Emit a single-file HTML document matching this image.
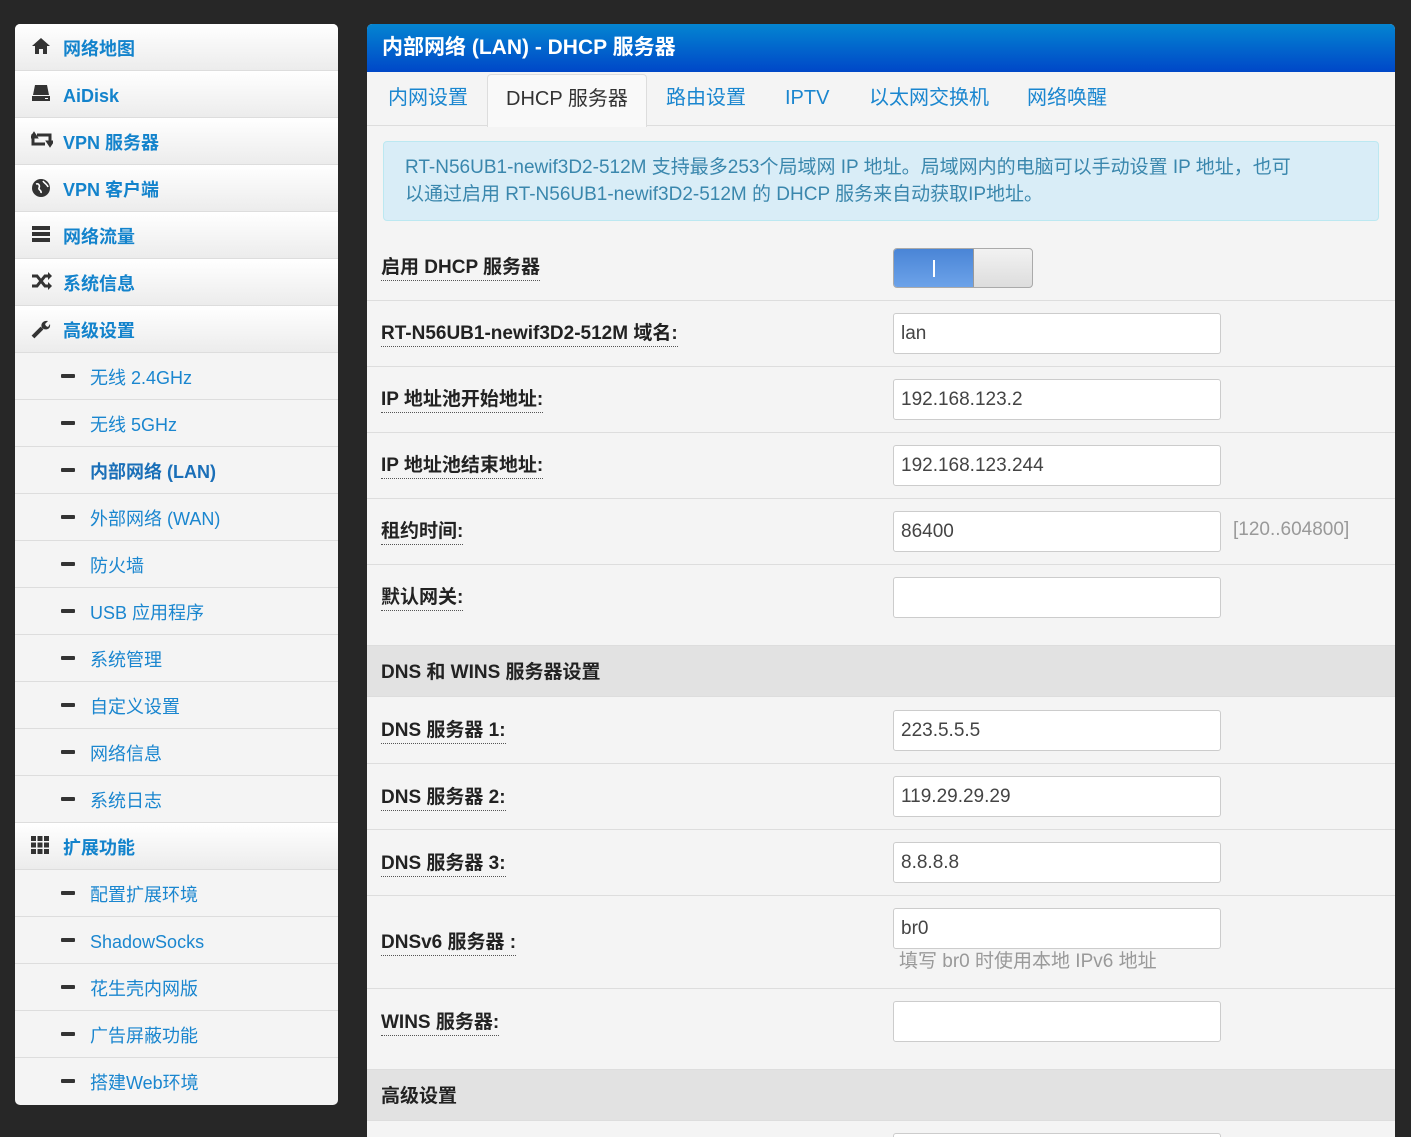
<!DOCTYPE html>
<html><head><meta charset="utf-8"><style>
*{box-sizing:border-box;margin:0;padding:0}
body{width:1411px;height:1137px;background:#272727;font-family:"Liberation Sans","Noto Sans CJK SC",sans-serif;overflow:hidden;position:relative}
.side{position:absolute;left:15px;top:24px;width:323px;height:1081px;background:#f4f4f4;border-radius:5px;overflow:hidden}
.it{position:absolute;left:0;width:323px;height:47px;border-bottom:1px solid #ddd}
.main{background:linear-gradient(#fff,#ececec)}
.main span{position:absolute;left:48px;top:13px;line-height:24px;font-weight:bold;font-size:18px;color:#1383cc}
.main svg{position:absolute;left:16px;top:13px}
.sub span{position:absolute;left:75px;top:13px;line-height:24px;font-size:18px;color:#1a86cf}
.sub i{position:absolute;left:46px;top:21px;width:14px;height:4px;background:#333;border-radius:1px}
.sub.act span{font-weight:bold;color:#1a6fb8}
.panel{position:absolute;left:367px;top:24px;width:1028px;height:1113px;background:#f4f4f4;border-radius:5px 5px 0 0;overflow:hidden}
.hdr{height:48px;background:linear-gradient(#0485d1,#0047c8);color:#fff;font-weight:bold;font-size:21px;line-height:26px;padding:11px 15px}
.tabs{position:absolute;top:48px;left:0;width:1028px;height:54px;border-bottom:1px solid #ddd}
.tab{position:absolute;top:13px;font-size:20px;line-height:26px;color:#1a86cf}
.tab.on{top:2px;height:53px;background:#f9f9f9;border:1px solid #ddd;border-bottom:none;border-radius:4px 4px 0 0;color:#333;padding:11px 18px 0}
.alert{position:absolute;left:16px;top:117px;width:996px;height:80px;background:#d9edf7;border:1px solid #bce8f1;border-radius:4px;color:#3a87ad;font-size:19px;line-height:27px;padding:12px 21px;white-space:nowrap}
.row{position:absolute;left:0;width:1028px;border-top:1px solid #ddd}
.lbl{position:absolute;left:14px;font-weight:bold;font-size:19px;color:#222;border-bottom:1px dotted #555;line-height:24px}
.inp{position:absolute;left:526px;width:328px;height:41px;background:#fff;border:1px solid #ccc;border-radius:3px;font-size:19px;line-height:22px;color:#444;padding:9px 7px}
.sec{position:absolute;left:0;width:1028px;height:52px;background:#e2e2e2;border-top:1px solid #ddd;border-bottom:1px solid #ddd;font-weight:bold;font-size:19px;line-height:24px;color:#222;padding:15px 14px 0}
</style></head><body>
<div class="side">
<div class="it main" style="top:0"><svg width="20" height="18" viewBox="0 0 20 18"><path d="M10 1L1 9h3v8h4v-5h4v5h4V9h3z" fill="#333"/></svg><span>网络地图</span></div>
<div class="it main" style="top:47px"><svg width="20" height="18" viewBox="0 0 20 18"><path d="M4 1h12l2 10H2z" fill="#333"/><rect x="1" y="12" width="18" height="5" fill="#333"/><rect x="14" y="14" width="3" height="1" fill="#fff"/></svg><span>AiDisk</span></div>
<div class="it main" style="top:94px"><svg width="22" height="18" viewBox="0 0 22 18"><path d="M2 3v10h12M5 6H1l2-3 2 3zM6 4h13v10M17 11h4l-2 3z" stroke="#333" stroke-width="3" fill="none"/></svg><span>VPN 服务器</span></div>
<div class="it main" style="top:141px"><svg width="20" height="20" viewBox="0 0 20 20"><circle cx="10" cy="10" r="9" fill="#333"/><path d="M5 6c3-1 4 2 3 4s3 2 2 5M12 3c1 2 4 3 5 6" stroke="#fff" stroke-width="1.6" fill="none"/></svg><span>VPN 客户端</span></div>
<div class="it main" style="top:188px"><svg width="20" height="18" viewBox="0 0 20 18"><rect x="1" y="1" width="18" height="4" fill="#333"/><rect x="1" y="7" width="18" height="4" fill="#333"/><rect x="1" y="13" width="18" height="4" fill="#333"/></svg><span>网络流量</span></div>
<div class="it main" style="top:235px"><svg width="22" height="18" viewBox="0 0 22 18"><path d="M1 4h5l8 10h4M1 14h5l8-10h4" stroke="#333" stroke-width="3" fill="none"/><path d="M17 0l4 4-4 4zM17 10l4 4-4 4z" fill="#333"/></svg><span>系统信息</span></div>
<div class="it main" style="top:282px"><svg width="20" height="20" viewBox="0 0 20 20"><path d="M2 18l9-9" stroke="#333" stroke-width="4"/><path d="M11 9c-2-4 1-8 6-7l-3 3 1 2 2 1 2-3c1 5-4 7-8 4z" fill="#333"/></svg><span>高级设置</span></div>
<div class="it sub" style="top:329px"><i></i><span>无线 2.4GHz</span></div>
<div class="it sub" style="top:376px"><i></i><span>无线 5GHz</span></div>
<div class="it sub act" style="top:423px"><i></i><span>内部网络 (LAN)</span></div>
<div class="it sub" style="top:470px"><i></i><span>外部网络 (WAN)</span></div>
<div class="it sub" style="top:517px"><i></i><span>防火墙</span></div>
<div class="it sub" style="top:564px"><i></i><span>USB 应用程序</span></div>
<div class="it sub" style="top:611px"><i></i><span>系统管理</span></div>
<div class="it sub" style="top:658px"><i></i><span>自定义设置</span></div>
<div class="it sub" style="top:705px"><i></i><span>网络信息</span></div>
<div class="it sub" style="top:752px"><i></i><span>系统日志</span></div>
<div class="it main" style="top:799px"><svg width="18" height="18" viewBox="0 0 18 18" fill="#333"><rect x="0" y="0" width="5" height="5"/><rect x="6.5" y="0" width="5" height="5"/><rect x="13" y="0" width="5" height="5"/><rect x="0" y="6.5" width="5" height="5"/><rect x="6.5" y="6.5" width="5" height="5"/><rect x="13" y="6.5" width="5" height="5"/><rect x="0" y="13" width="5" height="5"/><rect x="6.5" y="13" width="5" height="5"/><rect x="13" y="13" width="5" height="5"/></svg><span>扩展功能</span></div>
<div class="it sub" style="top:846px"><i></i><span>配置扩展环境</span></div>
<div class="it sub" style="top:893px"><i></i><span>ShadowSocks</span></div>
<div class="it sub" style="top:940px"><i></i><span>花生壳内网版</span></div>
<div class="it sub" style="top:987px"><i></i><span>广告屏蔽功能</span></div>
<div class="it sub" style="top:1034px;border:none"><i></i><span>搭建Web环境</span></div>
</div>

<div class="panel">
<div class="hdr">内部网络 (LAN) - DHCP 服务器</div>
<div class="tabs">
<div class="tab" style="left:21px">内网设置</div>
<div class="tab on" style="left:120px">DHCP 服务器</div>
<div class="tab" style="left:299px">路由设置</div>
<div class="tab" style="left:418px">IPTV</div>
<div class="tab" style="left:502px">以太网交换机</div>
<div class="tab" style="left:660px">网络唤醒</div>
</div>
<div class="alert">RT-N56UB1-newif3D2-512M 支持最多253个局域网 IP 地址。局域网内的电脑可以手动设置 IP 地址，也可<br>以通过启用 RT-N56UB1-newif3D2-512M 的 DHCP 服务来自动获取IP地址。</div>

<div class="lbl" style="top:232px">启用 DHCP 服务器</div>
<div style="position:absolute;left:526px;top:224px;width:140px;height:40px;border:1px solid #aaa;border-radius:4px;overflow:hidden;background:linear-gradient(#f2f2f2,#ddd)"><div style="width:80px;height:40px;background:linear-gradient(#4a85d6,#6ea4ea);border-right:1px solid #999"><div style="position:absolute;left:39px;top:11px;width:2px;height:17px;background:#fff"></div></div></div>

<div class="row" style="top:276px;height:66px"><div class="lbl" style="top:21px">RT-N56UB1-newif3D2-512M 域名:</div><div class="inp" style="top:12px">lan</div></div>
<div class="row" style="top:342px;height:66px"><div class="lbl" style="top:21px">IP 地址池开始地址:</div><div class="inp" style="top:12px">192.168.123.2</div></div>
<div class="row" style="top:408px;height:66px"><div class="lbl" style="top:21px">IP 地址池结束地址:</div><div class="inp" style="top:12px">192.168.123.244</div></div>
<div class="row" style="top:474px;height:66px"><div class="lbl" style="top:21px">租约时间:</div><div class="inp" style="top:12px">86400</div><div style="position:absolute;left:866px;top:20px;font-size:19px;color:#999">[120..604800]</div></div>
<div class="row" style="top:540px;height:81px"><div class="lbl" style="top:21px">默认网关:</div><div class="inp" style="top:12px"></div></div>
<div class="sec" style="top:621px">DNS 和 WINS 服务器设置</div>
<div class="row" style="top:673px;height:66px;border:none"><div class="lbl" style="top:22px">DNS 服务器 1:</div><div class="inp" style="top:13px">223.5.5.5</div></div>
<div class="row" style="top:739px;height:66px"><div class="lbl" style="top:22px">DNS 服务器 2:</div><div class="inp" style="top:12px">119.29.29.29</div></div>
<div class="row" style="top:805px;height:66px"><div class="lbl" style="top:22px">DNS 服务器 3:</div><div class="inp" style="top:12px">8.8.8.8</div></div>
<div class="row" style="top:871px;height:93px"><div class="lbl" style="top:35px">DNSv6 服务器 :</div><div class="inp" style="top:12px">br0</div><div style="position:absolute;left:532px;top:54px;font-size:19px;line-height:24px;color:#999">填写 br0 时使用本地 IPv6 地址</div></div>
<div class="row" style="top:964px;height:81px"><div class="lbl" style="top:22px">WINS 服务器:</div><div class="inp" style="top:12px"></div></div>
<div class="sec" style="top:1045px">高级设置</div>
<div class="inp" style="top:1109px"></div>
</div>
</body></html>
